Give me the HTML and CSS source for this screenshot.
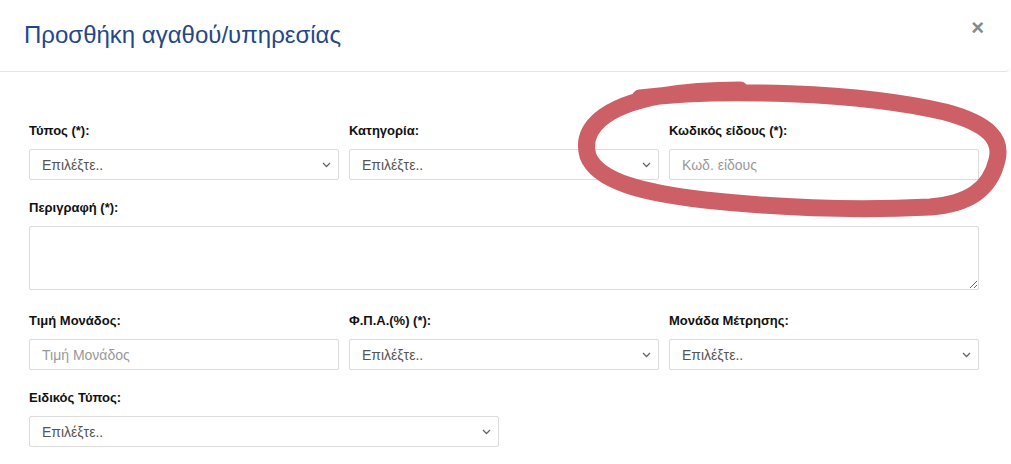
FILE: index.html
```html
<!DOCTYPE html>
<html lang="el">
<head>
<meta charset="utf-8">
<link rel="stylesheet" href="styles.css">
</head>
<body>
<div class="modal">
  <div class="modal-header">
    <h4 class="title">Προσθήκη αγαθού/υπηρεσίας</h4>
    <span class="close">×</span>
  </div>
  <div class="modal-body">
    <div class="row three">
      <div class="field">
        <label>Τύπος (*):</label>
        <div class="select"><span>Επιλέξτε..</span><svg width="9" height="6" viewBox="0 0 9 6"><path d="M1 1l3.5 3.5L8 1" fill="none" stroke="#666" stroke-width="1.3"/></svg></div>
      </div>
      <div class="field">
        <label>Κατηγορία:</label>
        <div class="select"><span>Επιλέξτε..</span><svg width="9" height="6" viewBox="0 0 9 6"><path d="M1 1l3.5 3.5L8 1" fill="none" stroke="#666" stroke-width="1.3"/></svg></div>
      </div>
      <div class="field">
        <label>Κωδικός είδους (*):</label>
        <input class="input" type="text" placeholder="Κωδ. είδους">
      </div>
    </div>
    <div class="row one">
      <div class="field">
        <label>Περιγραφή (*):</label>
        <textarea class="textarea"></textarea>
      </div>
    </div>
    <div class="row three">
      <div class="field">
        <label>Τιμή Μονάδος:</label>
        <input class="input" type="text" placeholder="Τιμή Μονάδος">
      </div>
      <div class="field">
        <label>Φ.Π.Α.(%) (*):</label>
        <div class="select"><span>Επιλέξτε..</span><svg width="9" height="6" viewBox="0 0 9 6"><path d="M1 1l3.5 3.5L8 1" fill="none" stroke="#666" stroke-width="1.3"/></svg></div>
      </div>
      <div class="field">
        <label>Μονάδα Μέτρησης:</label>
        <div class="select"><span>Επιλέξτε..</span><svg width="9" height="6" viewBox="0 0 9 6"><path d="M1 1l3.5 3.5L8 1" fill="none" stroke="#666" stroke-width="1.3"/></svg></div>
      </div>
    </div>
    <div class="row two">
      <div class="field">
        <label>Ειδικός Τύπος:</label>
        <div class="select"><span>Επιλέξτε..</span><svg width="9" height="6" viewBox="0 0 9 6"><path d="M1 1l3.5 3.5L8 1" fill="none" stroke="#666" stroke-width="1.3"/></svg></div>
      </div>
    </div>
  </div>
  <svg class="annotation" width="1011" height="464" viewBox="0 0 1011 464">
    <path d="M640 98 C 720 88, 860 92, 945 112 C 990 124, 1002 140, 997 160 C 990 190, 968 204, 930 207 C 850 211, 770 207, 705 200 C 645 193, 598 182, 588 156 C 580 128, 605 106, 660 96 C 690 91, 720 90, 740 90" fill="none" stroke="#cd5f66" stroke-width="17" stroke-linecap="round" stroke-linejoin="round"/>
  </svg>
</div>
</body>
</html>
```
FILE: styles.css
```css
* { box-sizing: border-box; }
html, body { margin: 0; padding: 0; background: #fff; }
body {
  font-family: "Liberation Sans", Arial, sans-serif;
  color: #333;
  width: 1011px;
  height: 464px;
  overflow: hidden;
}
.modal {
  position: relative;
  width: 1009px;
  height: 464px;
  background: #fff;
}
.modal-header {
  height: 72px;
  border-bottom: 1px solid #e5e5e5;
  border-bottom-right-radius: 4px;
  display: flex;
  align-items: center;
  justify-content: space-between;
  padding: 0 25px 0 24px;
}
.title {
  margin: 0;
  font-size: 24px;
  font-weight: normal;
  color: #25478a;
  line-height: 28px;
  padding-bottom: 1px;
}
.close {
  font-size: 22px;
  font-weight: bold;
  color: #888;
  line-height: 1;
  margin-top: -16px;
}
.modal-body {
  padding: 51px 25px 0 24px;
  display: flex;
  flex-direction: column;
  gap: 20px;
}
.row { display: grid; }
.row.three { grid-template-columns: repeat(3, 320px); }
.row.one { grid-template-columns: 960px; }
.row.two { grid-template-columns: 480px; }
.field {
  padding: 0 5px;
  display: flex;
  flex-direction: column;
}
label {
  font-size: 13px;
  font-weight: bold;
  color: #111;
  line-height: 16px;
  margin-bottom: 10px;
}
.select, .input {
  height: 31px;
  border: 1px solid #dcdcdc;
  border-radius: 2px;
  background: #fff;
  font-family: "Liberation Sans", Arial, sans-serif;
  font-size: 14px;
  padding: 0 12px;
  width: 100%;
}
.select {
  display: flex;
  align-items: center;
  justify-content: space-between;
  color: #555;
  padding-right: 7px;
}
.input {
  outline: none;
  color: #555;
}
.input::placeholder { color: #999; }
.textarea {
  width: 100%;
  height: 64px;
  border: 1px solid #dcdcdc;
  border-radius: 2px;
  resize: vertical;
  font-family: "Liberation Sans", Arial, sans-serif;
  outline: none;
}
.row.one + .row.three { margin-top: 3px; }
.annotation {
  position: absolute;
  left: 0;
  top: 0;
  pointer-events: none;
}
```
